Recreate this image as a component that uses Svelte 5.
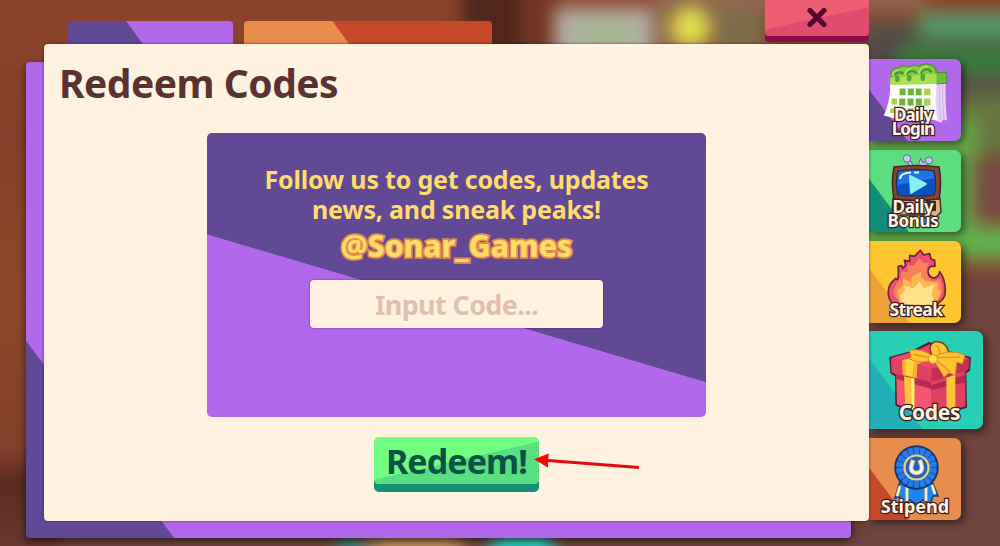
<script>
  let code = $state('');

  const tabs = [
    { id: 'login', lines: ['Daily', 'Login'] },
    { id: 'bonus', lines: ['Daily', 'Bonus'] },
    { id: 'streak', lines: ['Streak'] },
    { id: 'codes', lines: ['Codes'] },
    { id: 'stipend', lines: ['Stipend'] }
  ];

  const petals = Array.from({ length: 18 }, (_, i) => i * 20);
</script>

<div class="scene">
  <svg class="backdrop" viewBox="0 0 1000 546" aria-hidden="true">
    <defs>
      <filter id="soft" x="-20%" y="-20%" width="140%" height="140%">
        <feGaussianBlur stdDeviation="9" />
      </filter>
      <linearGradient id="wood" x2="0" y2="1">
        <stop offset="0" stop-color="#8c442c" />
        <stop offset=".25" stop-color="#84402a" />
        <stop offset=".55" stop-color="#8d482b" />
        <stop offset=".82" stop-color="#83402a" />
        <stop offset=".88" stop-color="#5c2a23" />
        <stop offset="1" stop-color="#68362f" />
      </linearGradient>
    </defs>
    <rect width="1000" height="546" fill="url(#wood)" />
    <g filter="url(#soft)">
      <rect x="462" y="-30" width="58" height="100" fill="#51251c" />
      <rect x="520" y="-30" width="35" height="100" fill="#713622" />
      <rect x="655" y="-30" width="110" height="110" fill="#7c6c4a" />
      <rect x="655" y="-30" width="270" height="40" fill="#92664f" />
      <rect x="860" y="20" width="160" height="130" fill="#575445" />
      <rect x="870" y="35" width="40" height="40" fill="#53454a" />
      <rect x="920" y="12" width="110" height="25" fill="#529967" />
      <rect x="898" y="48" width="130" height="24" fill="#33803b" />
      <rect x="850" y="95" width="180" height="60" fill="#667440" />
      <rect x="860" y="118" width="115" height="135" fill="#66ad49" />
      <rect x="970" y="160" width="60" height="60" fill="#784b45" />
      <rect x="860" y="228" width="170" height="30" fill="#60b651" />
      <rect x="860" y="272" width="170" height="310" fill="#70443f" />
      <rect x="60" y="530" width="960" height="50" fill="#70443e" />
    </g>
    <g filter="url(#soft)">
      <rect x="555" y="8" width="99" height="60" fill="#b3afa6" />
      <rect x="577" y="23" width="58" height="18" fill="#9eb889" />
      <circle cx="690" cy="28" r="22" fill="#ee9d35" />
      <ellipse cx="691" cy="26" rx="15" ry="19" fill="#dce653" />
      <rect x="338" y="538" width="28" height="22" fill="#32948d" />
      <rect x="372" y="538" width="90" height="24" fill="#d9a66c" />
      <rect x="492" y="534" width="60" height="26" fill="#25e1db" />
    </g>
  </svg>

  <div class="window">
    <main>
      <header>
        <div class="top-tab violet"></div>
        <div class="top-tab orange"></div>
        <button class="close" aria-label="Close">
          <svg width="20" height="20" viewBox="0 0 20 20">
            <path d="M3 2.500 17 16.500M17 2.500 3 16.500" stroke="#55062b" stroke-width="5.2" stroke-linecap="round" />
          </svg>
        </button>
      </header>

      <section class="panel">
        <h1>Redeem Codes</h1>
        <div class="card">
          <p class="follow">Follow us to get codes, updates<br />news, and sneak peaks!</p>
          <p class="handle">@Sonar_Games</p>
          <input bind:value={code} placeholder="Input Code..." />
        </div>
        <button class="redeem">Redeem!</button>
        <svg class="arrow" width="106" height="18" viewBox="0 0 106 18" aria-hidden="true">
          <path d="M14 7.500 105 14.500" stroke="#e30b0b" stroke-width="3" />
          <path d="M0 6.300 14.600.4 14 14.400Z" fill="#fb0505" />
        </svg>
      </section>
    </main>

    <nav>
      {#each tabs as tab (tab.id)}
        <button class="side-tab {tab.id}">
          {#if tab.id === 'login'}
            <svg width="65" height="61" viewBox="70 40 196 184">
              <path d="M230 98 259 96Q257 160 263 214L252 210 246 220 228 214Z" fill="#e6d0f8" />
              <path d="M240 105Q238 160 244 212M250 104Q248 160 254 208" fill="none" stroke="#cdb0ea" stroke-width="3" />
              <path d="M92 100 232 98Q226 160 234 212L100 206 72 198Q92 160 92 100Z" fill="#fffdf9" />
              <path d="M228 70 262 68 262 101 230 103Z" fill="#6fbd3c" stroke="#4f8f38" stroke-width="3" />
              <path d="M95 74Q130 64 232 66L232 103 93 106Q89 88 95 74Z" fill="#a9e04e" />
              <path d="M95 84Q90 58 116 56Q126 44 148 52Q162 42 178 50Q200 36 222 50Q232 58 230 72" fill="#7fcc40" stroke="#4b9138" stroke-width="4" />
              <path d="M106 78Q108 68 122 68L132 72M142 76Q144 64 160 64L172 70M184 72Q188 56 208 60L216 68" fill="none" stroke="#4f9138" stroke-width="7" />
              <path d="M98 78Q101 60 120 61M137 76Q139 58 156 57M178 72Q181 52 205 50" fill="none" stroke="#a5e253" stroke-width="7" />
              <g fill="#5aa23a">
                <ellipse cx="113" cy="88" rx="7" ry="10" /><ellipse cx="149" cy="86" rx="7" ry="10" /><ellipse cx="190" cy="83" rx="7" ry="11" />
              </g>
              <path d="M120 117h18v20h-18zM145 117h18v20h-18zM169 117h17v20h-17zM119 147h18v21h-18zM144 147h18v21h-18zM169 147h18v21h-18zM117 177h18v16h-18zM144 177h18v16h-18z" fill="#69b53b" />
              <path d="M194 117h19v20h-19zM193 147h20v21h-20zM96 147h16v18H96zM92 177h18v14H92z" fill="#a8d34a" />
            </svg>
          {:else if tab.id === 'bonus'}
            <svg width="54" height="66" viewBox="0 0 54 66">
              <path d="M17 5 24 15M39 7 33 11 31 8 29 15" fill="none" stroke="#6967a0" stroke-width="4" />
              <path d="M17 5 24 15M39 7 33 11 31 8 29 15" fill="none" stroke="#c2bde8" stroke-width="2.200" />
              <circle cx="17" cy="4.500" r="3.700" fill="#c8c8f2" stroke="#6367a0" />
              <circle cx="39" cy="6.500" r="3.500" fill="#c8c8f2" stroke="#6367a0" />
              <path d="M3 44 50 44 51 58 46 63 40 61 11 61 7 63 2 58Z" fill="#deb478" stroke="#4b2c25" stroke-width="1.500" />
              <path d="M7 48h16v9H7zM36 47h10v10h-10z" fill="#3c2832" />
              <path d="M25 49h9M25 52h9" stroke="#9c6b40" />
              <path d="M4 13Q27 10 49 13Q52 29 49 45Q27 48 4 45Q1 29 4 13Z" fill="#85462b" stroke="#45222a" stroke-width="1.600" />
              <path d="M8 17Q27 14 44 17Q47 30 44 41Q27 43 8 41Q5 30 8 17Z" fill="#2274e2" stroke="#1b2f5e" stroke-width="1.500" />
              <path d="M8 31 45 24 44 40Q27 42 8 40Z" fill="#0d50bd" />
              <path d="M10 25Q10 19 21 18.500M24 18.500h5" fill="none" stroke="#dff9ff" stroke-width="2.200" />
              <path d="M20 22 36 30 21 39Z" fill="#86f0f4" stroke="#86f0f4" stroke-width="2" stroke-linejoin="round" />
            </svg>
          {:else if tab.id === 'streak'}
            <svg width="60" height="60" viewBox="80 50 180 180">
              <path d="M100 218Q82 200 84 176Q86 156 98 146L106 138 112 142Q116 120 113 103L124 100 128 108 136 98 132 84 148 87 148 69 162 72 180 54 190 68 208 64 212 80 223 84 224 102Q204 98 203 118Q205 136 222 137Q236 133 238 118Q254 138 255 172Q256 200 236 210L230 222Z" fill="#ee4f72" stroke="#6b2438" stroke-width="5" stroke-linejoin="round" />
              <path d="M112 200Q92 190 104 160L118 138 124 148 122 118 144 118 140 98 160 100 176 76 190 92 208 92 200 100Q194 130 216 146L240 140Q252 170 240 196L226 214 116 214Z" fill="#fa8158" />
              <path d="M118 210 110 176 128 158 128 138 152 150Q148 130 176 122 186 112 182 134L196 146 236 152Q228 168 242 178L226 218 122 218Z" fill="#fdb650" />
              <path d="M126 216 118 190 136 174 128 160 160 168 178 148 190 168 222 156 214 184 226 218Z" fill="#ffe28a" />
            </svg>
          {:else if tab.id === 'codes'}
            <svg width="82" height="79" viewBox="85 45 246 237">
              <path d="M89 98 150 82 206 54 262 80 328 99 325 136 314 142 316 246 212 276 107 240 106 152 92 144Z" fill="#e0405f" stroke="#522036" stroke-width="6" stroke-linejoin="round" />
              <path d="M91 99 206 66 326 100 213 130Z" fill="#ea4967" />
              <path d="M91 101 213 131 212 170 93 142Z" fill="#df4161" />
              <path d="M213 131 327 101 324 134 212 170Z" fill="#c42f55" />
              <path d="M107 150 212 171 212 273 109 238Z" fill="#f5566f" />
              <path d="M107 148 212 171 212 192 107 161Z" fill="#b92b50" />
              <path d="M212 171 314 141 314 244 212 273Z" fill="#dd4262" />
              <path d="M212 180 314 150V172L212 196Z" fill="#b32b4f" />
              <path d="M130 154 161 161 161 256 134 247ZM257 158 284 149 284 253 258 260Z" fill="#fdc63a" />
              <path d="M151 159 161 161V256L154 254Z" fill="#fff07b" />
              <path d="M124 106 190 88 212 100 170 118 168 160 126 150Z" fill="#fbb02f" />
              <path d="M134 106 182 91 198 98 158 113 155 155 136 151Z" fill="#ffd63f" />
              <path d="M218 98Q196 60 224 50Q258 48 264 84L240 100Z" fill="#ffc62f" stroke="#6f322c" stroke-width="4" />
              <path d="M216 104Q182 118 148 103 156 92 146 76 184 68 216 94Z" fill="#ffc62f" stroke="#d98b28" stroke-width="3" />
              <path d="M216 98Q260 68 312 90L306 116 288 112 284 150 264 144 250 156Z" fill="#ffc42f" stroke="#d98b28" stroke-width="3" />
              <path d="M226 105 268 140M230 98 300 96M158 88 205 98M224 61Q242 70 235 90" fill="none" stroke="#e99b28" stroke-width="5" />
              <circle cx="217" cy="102" r="13" fill="#ffe04b" stroke="#e39b2c" stroke-width="3" />
            </svg>
          {:else}
            <svg width="50" height="64" viewBox="0 0 50 64">
              <path d="M8 36 3 53 8 52 11 60 18 55 25 60 31 55 38 60 41 51 46 51 40 36Z" fill="#1f83f0" stroke="#183c78" stroke-width="1.500" />
              <path d="M8 41 5 51M15 42V56M34 41V56M40 40 43 49" stroke="#e9cf86" stroke-width="3" />
              <path d="M8 41 5 51M15 42V56M34 41V56M40 40 43 49" stroke="#fffbe4" stroke-width="1.300" />
              <circle cx="24.500" cy="22.500" r="21.300" fill="#1550b6" stroke="#163470" stroke-width="1.800" />
              {#each petals as angle}
                <path d="M23 13 21.700 3Q24.500.8 27.300 3L26 13Z" fill="#2b7be4" transform="rotate({angle} 24.500 22.500)" />
              {/each}
              <circle cx="24.500" cy="22.500" r="12" fill="#1d62c4" stroke="#efd27d" stroke-width="2.200" />
              <path d="M20.500 17Q16.500 27.500 24.500 28Q32.500 27.500 28.500 17" fill="none" stroke="#d9b968" stroke-width="4.600" stroke-linecap="square" />
              <path d="M20.500 17Q16.500 27.500 24.500 28Q32.500 27.500 28.500 17" fill="none" stroke="#f3f1ea" stroke-width="3" stroke-linecap="square" />
            </svg>
          {/if}
          <span class="label">{#each tab.lines as line}<span>{line}</span>{/each}</span>
        </button>
      {/each}
    </nav>
  </div>
</div>

<style>
  :global(body) {
    margin: 0;
    background: #84402a;
  }

  .scene {
    position: relative;
    width: 1000px;
    height: 546px;
    overflow: hidden;
    font-family: "Noto Sans", "Open Sans", sans-serif;
    font-weight: 700;
  }

  .backdrop {
    position: absolute;
    inset: 0;
  }

  button {
    padding: 0;
    border: none;
    font: inherit;
    cursor: pointer;
  }

  h1,
  p {
    margin: 0;
    white-space: nowrap;
  }

  .window {
    position: relative;
    display: flex;
    padding-left: 44px;
  }

  main {
    width: 825px;
  }

  header {
    display: flex;
    align-items: flex-end;
    height: 44px;
    padding-left: 24px;
    box-sizing: border-box;
  }

  .top-tab {
    height: 23px;
    border-radius: 4px 4px 0 0;
  }

  .top-tab.violet {
    width: 165px;
    margin-right: 11px;
    background: linear-gradient(54deg, #614995 51.500px, #b168eb 52.500px);
    background: linear-gradient(54deg, #614995 60px, #b168eb 61px);
  }

  .top-tab.orange {
    width: 248px;
    background: linear-gradient(54deg, #e98d4c 84.500px, #c54928 85.500px);
  }

  .close {
    display: flex;
    align-items: center;
    justify-content: center;
    align-self: flex-start;
    width: 104px;
    height: 36px;
    margin-left: auto;
    border-radius: 0 0 4px 4px;
    background: linear-gradient(168deg, #ee5e73 50%, #de4c70 51%);
    box-shadow: 0 6px 0 #890f46;
  }

  .panel {
    position: relative;
    display: flex;
    flex-direction: column;
    align-items: center;
    height: 477px;
    border-radius: 4px;
    background: #fff2e0;
    box-shadow: 0 0 3px rgba(40, 0, 60, 0.65);
  }

  /* violet sheet peeking out behind the panel */
  .window::before {
    content: '';
    position: absolute;
    left: 26px;
    top: 62px;
    width: 825px;
    height: 476px;
    border-radius: 4px;
    background: linear-gradient(53.100deg, #614995 118px, #b168eb 119px);
    box-shadow: 0 3px 9px rgba(0, 0, 0, 0.6);
  }

  h1 {
    align-self: flex-start;
    height: 89px;
    padding-left: 15px;
    color: #593231;
    font-size: 39px;
    letter-spacing: -0.5px;
    line-height: 78px;
  }

  .card {
    display: flex;
    flex-direction: column;
    align-items: center;
    width: 499px;
    height: 284px;
    border-radius: 5px;
    background: linear-gradient(196.500deg, #614995 57.600%, #b168eb 57.800%);
  }

  .follow {
    padding-top: 31px;
    color: #ffdc6c;
    font-size: 25px;
    letter-spacing: -0.2px;
    line-height: 30px;
    text-align: center;
  }

  .handle {
    height: 56px;
    color: #ffdc65;
    font-size: 30px;
    font-weight: 800;
    line-height: 43px;
    -webkit-text-stroke: 3.500px #e58b4d;
    paint-order: stroke fill;
  }

  input {
    width: 293px;
    height: 48px;
    padding: 0;
    box-sizing: border-box;
    border: none;
    border-radius: 4px;
    outline: none;
    background: #fff2e0;
    box-shadow: 0 0 2px rgba(50, 10, 80, 0.6);
    color: #593231;
    font: inherit;
    font-size: 27px;
    letter-spacing: -0.650px;
    text-align: center;
  }

  input::placeholder {
    color: #dfbfad;
    opacity: 1;
  }

  .redeem {
    width: 165px;
    height: 47px;
    margin-top: 20px;
    border-radius: 5px;
    background: linear-gradient(167deg, #70fd82 50%, #5ade82 50.500%);
    box-shadow: 0 8px 0 #129078;
    color: #075344;
    font-size: 34px;
    letter-spacing: -0.900px;
    line-height: 46px;
  }

  .arrow {
    position: absolute;
    left: 490px;
    top: 409px;
  }

  nav {
    display: flex;
    flex-direction: column;
    gap: 9px;
    padding-top: 59px;
  }

  .side-tab {
    display: grid;
    justify-items: center;
    width: 92px;
    height: 82px;
    border-radius: 0 7px 7px 0;
    box-shadow: 3px 3px 9px rgba(0, 0, 0, 0.55);
  }

  .side-tab > * {
    grid-area: 1 / 1;
  }

  .side-tab svg {
    align-self: start;
  }

  .label {
    display: flex;
    flex-direction: column;
    align-self: end;
    color: #fff4e5;
    font-size: 17.500px;
    letter-spacing: -0.300px;
    line-height: 14px;
    -webkit-text-stroke: 2.500px #38211f;
    paint-order: stroke fill;
    z-index: 1;
  }

  .login { background: linear-gradient(53deg, #614995 30.500px, #b168eb 31.500px); }
  .login svg { margin: 4px 0 0 1px; }
  .login .label { padding: 0 4px 5px 0; font-size: 17px; letter-spacing: -0.900px; }

  .bonus { background: linear-gradient(53deg, #138e7b 31.500px, #5bdd80 32.500px); }
  .bonus svg { margin: 4px 0 0 4px; }
  .bonus .label { padding: 0 4px 4px 0; font-size: 17px; }

  .streak { background: linear-gradient(54deg, #eda237 32px, #ffc62f 33px); }
  .streak svg { margin: 8px 0 0 3px; }
  .streak .label { padding: 0 0 7px 2px; letter-spacing: -0.600px; }

  .codes {
    width: 114px;
    height: 98px;
    margin-top: -1px;
    background: linear-gradient(53deg, #20b0b6 42px, #27cfb5 43px);
  }
  .codes svg { margin: 9px 0 0 8px; }
  .codes .label { padding: 0 0 10px 7px; font-size: 21px; }

  .stipend { background: linear-gradient(53deg, #c54928 31px, #e98d4c 32px); }
  .stipend svg { margin: 7px 0 0 3px; }
  .stipend .label { padding: 0 0 7px; font-size: 18px; letter-spacing: 0; }
</style>
